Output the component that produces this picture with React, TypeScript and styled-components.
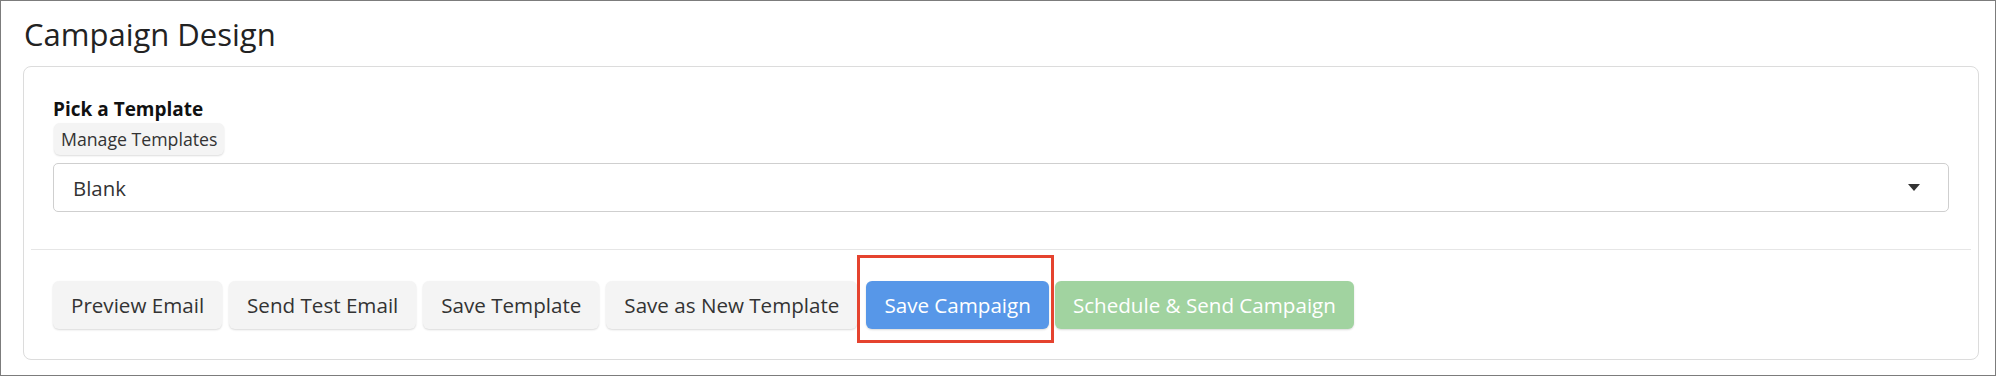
import styled, { createGlobalStyle } from 'styled-components'

const GlobalStyle = createGlobalStyle`
  html, body {
    margin: 0;
    padding: 0;
    background: #fff;
  }
  body {
    font-family: 'Open Sans', 'Liberation Sans', sans-serif;
    color: #333;
  }
  * {
    box-sizing: border-box;
  }
`

const Page = styled.div`
  width: 1996px;
  height: 376px;
  border: 1px solid #7c7c7c;
  padding: 0 16px 0 22px;
  overflow: hidden;
`

const Title = styled.h1`
  margin: 0;
  padding: 12px 0 0 1px;
  height: 65px;
  font-size: 31px;
  line-height: 42px;
  font-weight: 400;
  color: #222;
`

const Card = styled.div`
  height: 294px;
  border: 1px solid #dcdcdc;
  border-radius: 8px;
  padding: 0 7px;
`

const TemplateSection = styled.section`
  padding: 29px 22px 37px;
  display: flex;
  flex-direction: column;
`

const Label = styled.label`
  font-size: 19px;
  font-weight: 700;
  line-height: 26px;
  color: #111;
`

const SmallButton = styled.button`
  align-self: flex-start;
  height: 32px;
  margin: 1px 0 8px 1px;
  padding: 0 7px;
  border: none;
  border-radius: 6px;
  background: #f4f4f4;
  box-shadow: 0 1px 2px rgba(0, 0, 0, 0.14);
  font-family: inherit;
  font-size: 17.7px;
  color: #333;
`

const Select = styled.div`
  height: 49px;
  display: flex;
  align-items: center;
  justify-content: space-between;
  padding: 0 28px 0 19px;
  border: 1px solid #cfcfcf;
  border-radius: 5px;
  font-size: 20.4px;
  color: #333;
`

const Caret = styled.span`
  width: 0;
  height: 0;
  border-left: 6px solid transparent;
  border-right: 6px solid transparent;
  border-top: 7px solid #333;
`

const Divider = styled.hr`
  margin: 0;
  border: none;
  border-top: 1px solid #e6e6e6;
`

const ActionRow = styled.div`
  display: flex;
  gap: 7px;
  padding: 31px 22px 0;
`

type Variant = 'default' | 'primary' | 'success'

const colors: Record<Variant, { bg: string; fg: string }> = {
  default: { bg: '#f4f4f4', fg: '#333' },
  primary: { bg: '#5797e8', fg: '#fff' },
  success: { bg: '#a1d3a0', fg: '#fff' },
}

const ActionButton = styled.button<{ $variant?: Variant }>`
  height: 48px;
  padding: 0 18px;
  border: none;
  border-radius: 6px;
  background: ${({ $variant = 'default' }) => colors[$variant].bg};
  color: ${({ $variant = 'default' }) => colors[$variant].fg};
  box-shadow: 0 1px 2px rgba(0, 0, 0, 0.15);
  font-family: inherit;
  font-size: 20.6px;
  white-space: nowrap;
`

const Highlight = styled.span`
  position: relative;
  display: inline-flex;
  margin: 0 -1px 0 2px;

  &::after {
    content: '';
    position: absolute;
    top: -26px;
    left: -9px;
    right: -5px;
    bottom: -14px;
    border: 3px solid #e5432f;
    pointer-events: none;
  }
`

export default function App() {
  return (
    <>
      <GlobalStyle />
      <Page>
        <Title>Campaign Design</Title>
        <Card>
          <TemplateSection>
            <Label>Pick a Template</Label>
            <SmallButton>Manage Templates</SmallButton>
            <Select>
              <span>Blank</span>
              <Caret />
            </Select>
          </TemplateSection>
          <Divider />
          <ActionRow>
            <ActionButton>Preview Email</ActionButton>
            <ActionButton>Send Test Email</ActionButton>
            <ActionButton>Save Template</ActionButton>
            <ActionButton>Save as New Template</ActionButton>
            <Highlight>
              <ActionButton $variant="primary">Save Campaign</ActionButton>
            </Highlight>
            <ActionButton $variant="success">Schedule &amp; Send Campaign</ActionButton>
          </ActionRow>
        </Card>
      </Page>
    </>
  )
}
